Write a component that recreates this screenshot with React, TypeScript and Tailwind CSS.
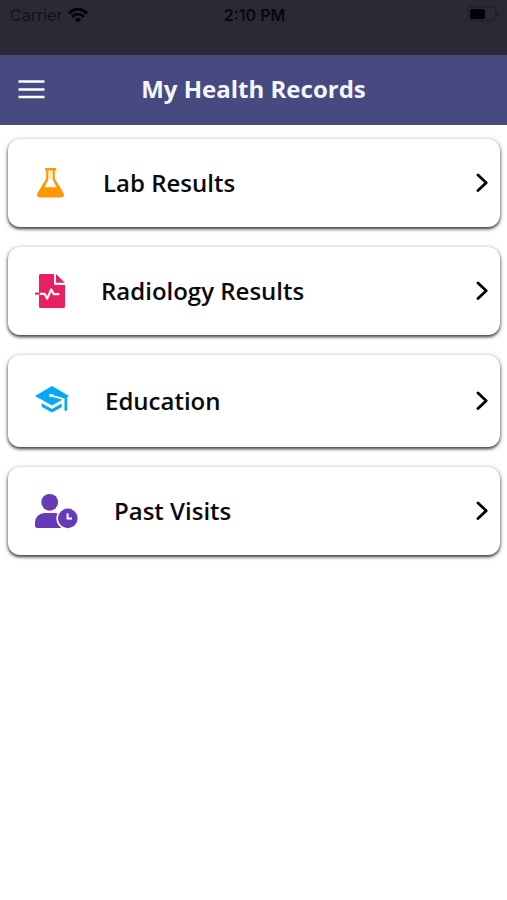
import type { ReactNode } from "react";

function FlaskIcon() {
  return (
    <svg width="32" height="30" viewBox="0 0 32 30" fill="#ff9800" aria-hidden="true">
      <path
        fillRule="evenodd"
        d="M10.6 0H20.6a.7.7 0 0 1 .7.7V1.7a.7.7 0 0 1-.7.7H19.8V10.8L28.3 24.8C29.8 27.3 28.8 29.5 26 29.5H5C2.2 29.5 1.2 27.3 2.7 24.8L11.2 10.8V2.4H10.6a.7.7 0 0 1-.7-.7V.7a.7.7 0 0 1 .7-.7ZM13.4 2.4V11.5L9.4 19.2H21.6L17.6 11.5V2.4Z"
      />
      <path d="M15 2.4H16.2V10.5H15Z" opacity=".35" />
    </svg>
  );
}

function RecordIcon() {
  return (
    <svg width="30" height="36" viewBox="0 0 30 36" aria-hidden="true">
      <path
        fill="#e91e63"
        d="M5.5 1H19V10.5a1.5 1.5 0 0 0 1.5 1.5H30V33.5a1.5 1.5 0 0 1-1.5 1.5H5.5A1.5 1.5 0 0 1 4 33.5V2.5A1.5 1.5 0 0 1 5.5 1ZM21 1 29.8 9.8H21Z"
      />
      <path d="M4 20.8H9.5L12.2 25.6L16.2 16.4L18.8 21.2H23.5" fill="none" stroke="#fff" strokeWidth="2.2" strokeLinejoin="round" strokeLinecap="round" />
      <path d="M0 20.6H5" stroke="#e91e63" strokeWidth="2" />
    </svg>
  );
}

function EducationIcon() {
  return (
    <svg width="34" height="30" viewBox="0 0 34 30" aria-hidden="true">
      <path fill="#03a9f4" d="M17 0 34 9.9 17 19.4 0 9.9Z" />
      <path fill="#03a9f4" d="M6.6 17.2 17 23 26.6 17.6V21.2L17 26.6 6.6 20.8Z" />
      <path d="M15.6 9.4 28.6 13.2V25" fill="none" stroke="#fff" strokeWidth="1.8" strokeLinecap="round" strokeLinejoin="round" />
      <ellipse cx="16.4" cy="9.6" rx="2.6" ry="1.7" fill="#fff" />
      <path d="M30.8 10.8V23.8" fill="none" stroke="#03a9f4" strokeWidth="2.6" strokeLinecap="round" />
    </svg>
  );
}

function VisitsIcon() {
  return (
    <svg width="43" height="36" viewBox="0 0 43 36" aria-hidden="true">
      <circle cx="14.7" cy="9.3" r="8.4" fill="#673ab7" />
      <path fill="#673ab7" d="M9.5 20H20C24.5 20 27 23 27 27V35H2.5A2.5 2.5 0 0 1 0 32.5V29.5A9.5 9.5 0 0 1 9.5 20Z" />
      <circle cx="32.8" cy="25.4" r="11.4" fill="#fff" />
      <circle cx="32.8" cy="25.4" r="9.8" fill="#673ab7" />
      <path d="M32.6 20.4V25.6H37" fill="none" stroke="#fff" strokeWidth="2" />
    </svg>
  );
}

function Chevron() {
  return (
    <svg width="12" height="20" viewBox="0 0 12 20" fill="none" stroke="#000" strokeWidth="2.8" strokeLinecap="round" strokeLinejoin="round" aria-hidden="true">
      <path d="M2 1.9 10.2 9.7 2 17.5" />
    </svg>
  );
}

function StatusBar() {
  return (
    <div className="grid h-[55px] grid-cols-3 items-start bg-[#2a2936] pt-1 pr-2 pl-[10px] font-['Inter','Liberation_Sans',sans-serif] text-base leading-[22px] text-[#08080d]">
      <div className="flex items-center gap-[6px]">
        <span className="text-[#12121a]">Carrier</span>
        <svg width="20" height="15" viewBox="0 0 20 15" fill="none" stroke="#050508" strokeWidth="2.8" aria-label="Wi-Fi">
          <path d="M1 5.6C6-.2 14-.2 19 5.6M4.2 9C7.5 5.2 12.5 5.2 15.8 9" />
          <path d="M6.8 11.2C8.6 9.1 11.4 9.1 13.2 11.2L10 14.5Z" fill="#050508" stroke="none" />
        </svg>
      </div>
      <span className="text-center font-semibold">2:10 PM</span>
      <svg className="mt-px justify-self-end" width="32" height="17" viewBox="0 0 32 17" aria-label="Battery">
        <rect x="1" y="1.5" width="28" height="14" rx="4" fill="none" stroke="#201f2a" strokeWidth="1.3" />
        <rect x="3" y="4" width="15" height="10" rx="2" fill="#020204" />
        <path d="M31 6.5V10.5" stroke="#201f2a" strokeWidth="1.3" />
      </svg>
    </div>
  );
}

type RecordCardProps = { icon: ReactNode; label: string; tall?: boolean };

function RecordCard({ icon, label, tall }: RecordCardProps) {
  return (
    <li>
      <button
        type="button"
        className={`${tall ? "h-[92px]" : "h-[88px]"} flex w-full items-center rounded-xl bg-white pr-3 pl-[27px] text-left shadow-[0_2px_3px_rgba(0,0,0,0.65),0_1px_5px_rgba(0,0,0,0.35)]`}
      >
        {icon}
        <span className="ml-9 flex-1 text-2xl font-semibold text-[#0a0a0a]">{label}</span>
        <Chevron />
      </button>
    </li>
  );
}

export default function App() {
  return (
    <div className="min-h-screen bg-white font-['Open_Sans','Noto_Sans',sans-serif]">
      <StatusBar />
      <header className="grid h-[70px] grid-cols-[28px_1fr_28px] items-center bg-[#464a80] px-[18px] pb-[2px] text-white">
        <button type="button" aria-label="Open menu">
          <svg width="27" height="20" viewBox="0 0 27 20" stroke="#fff" strokeWidth="2.6" aria-hidden="true">
            <path d="M.5 2.5H26.5M.5 10.5H26.5M.5 18H26.5" />
          </svg>
        </button>
        <h1 className="text-center text-2xl font-bold text-[#f4f6ff]">My Health Records</h1>
      </header>
      <main>
        <ul className="flex flex-col gap-5 pt-[14px] pr-[7px] pl-2">
          <RecordCard icon={<FlaskIcon />} label="Lab Results" />
          <RecordCard icon={<RecordIcon />} label="Radiology Results" />
          <RecordCard icon={<EducationIcon />} label="Education" tall />
          <RecordCard icon={<VisitsIcon />} label="Past Visits" />
        </ul>
      </main>
    </div>
  );
}
